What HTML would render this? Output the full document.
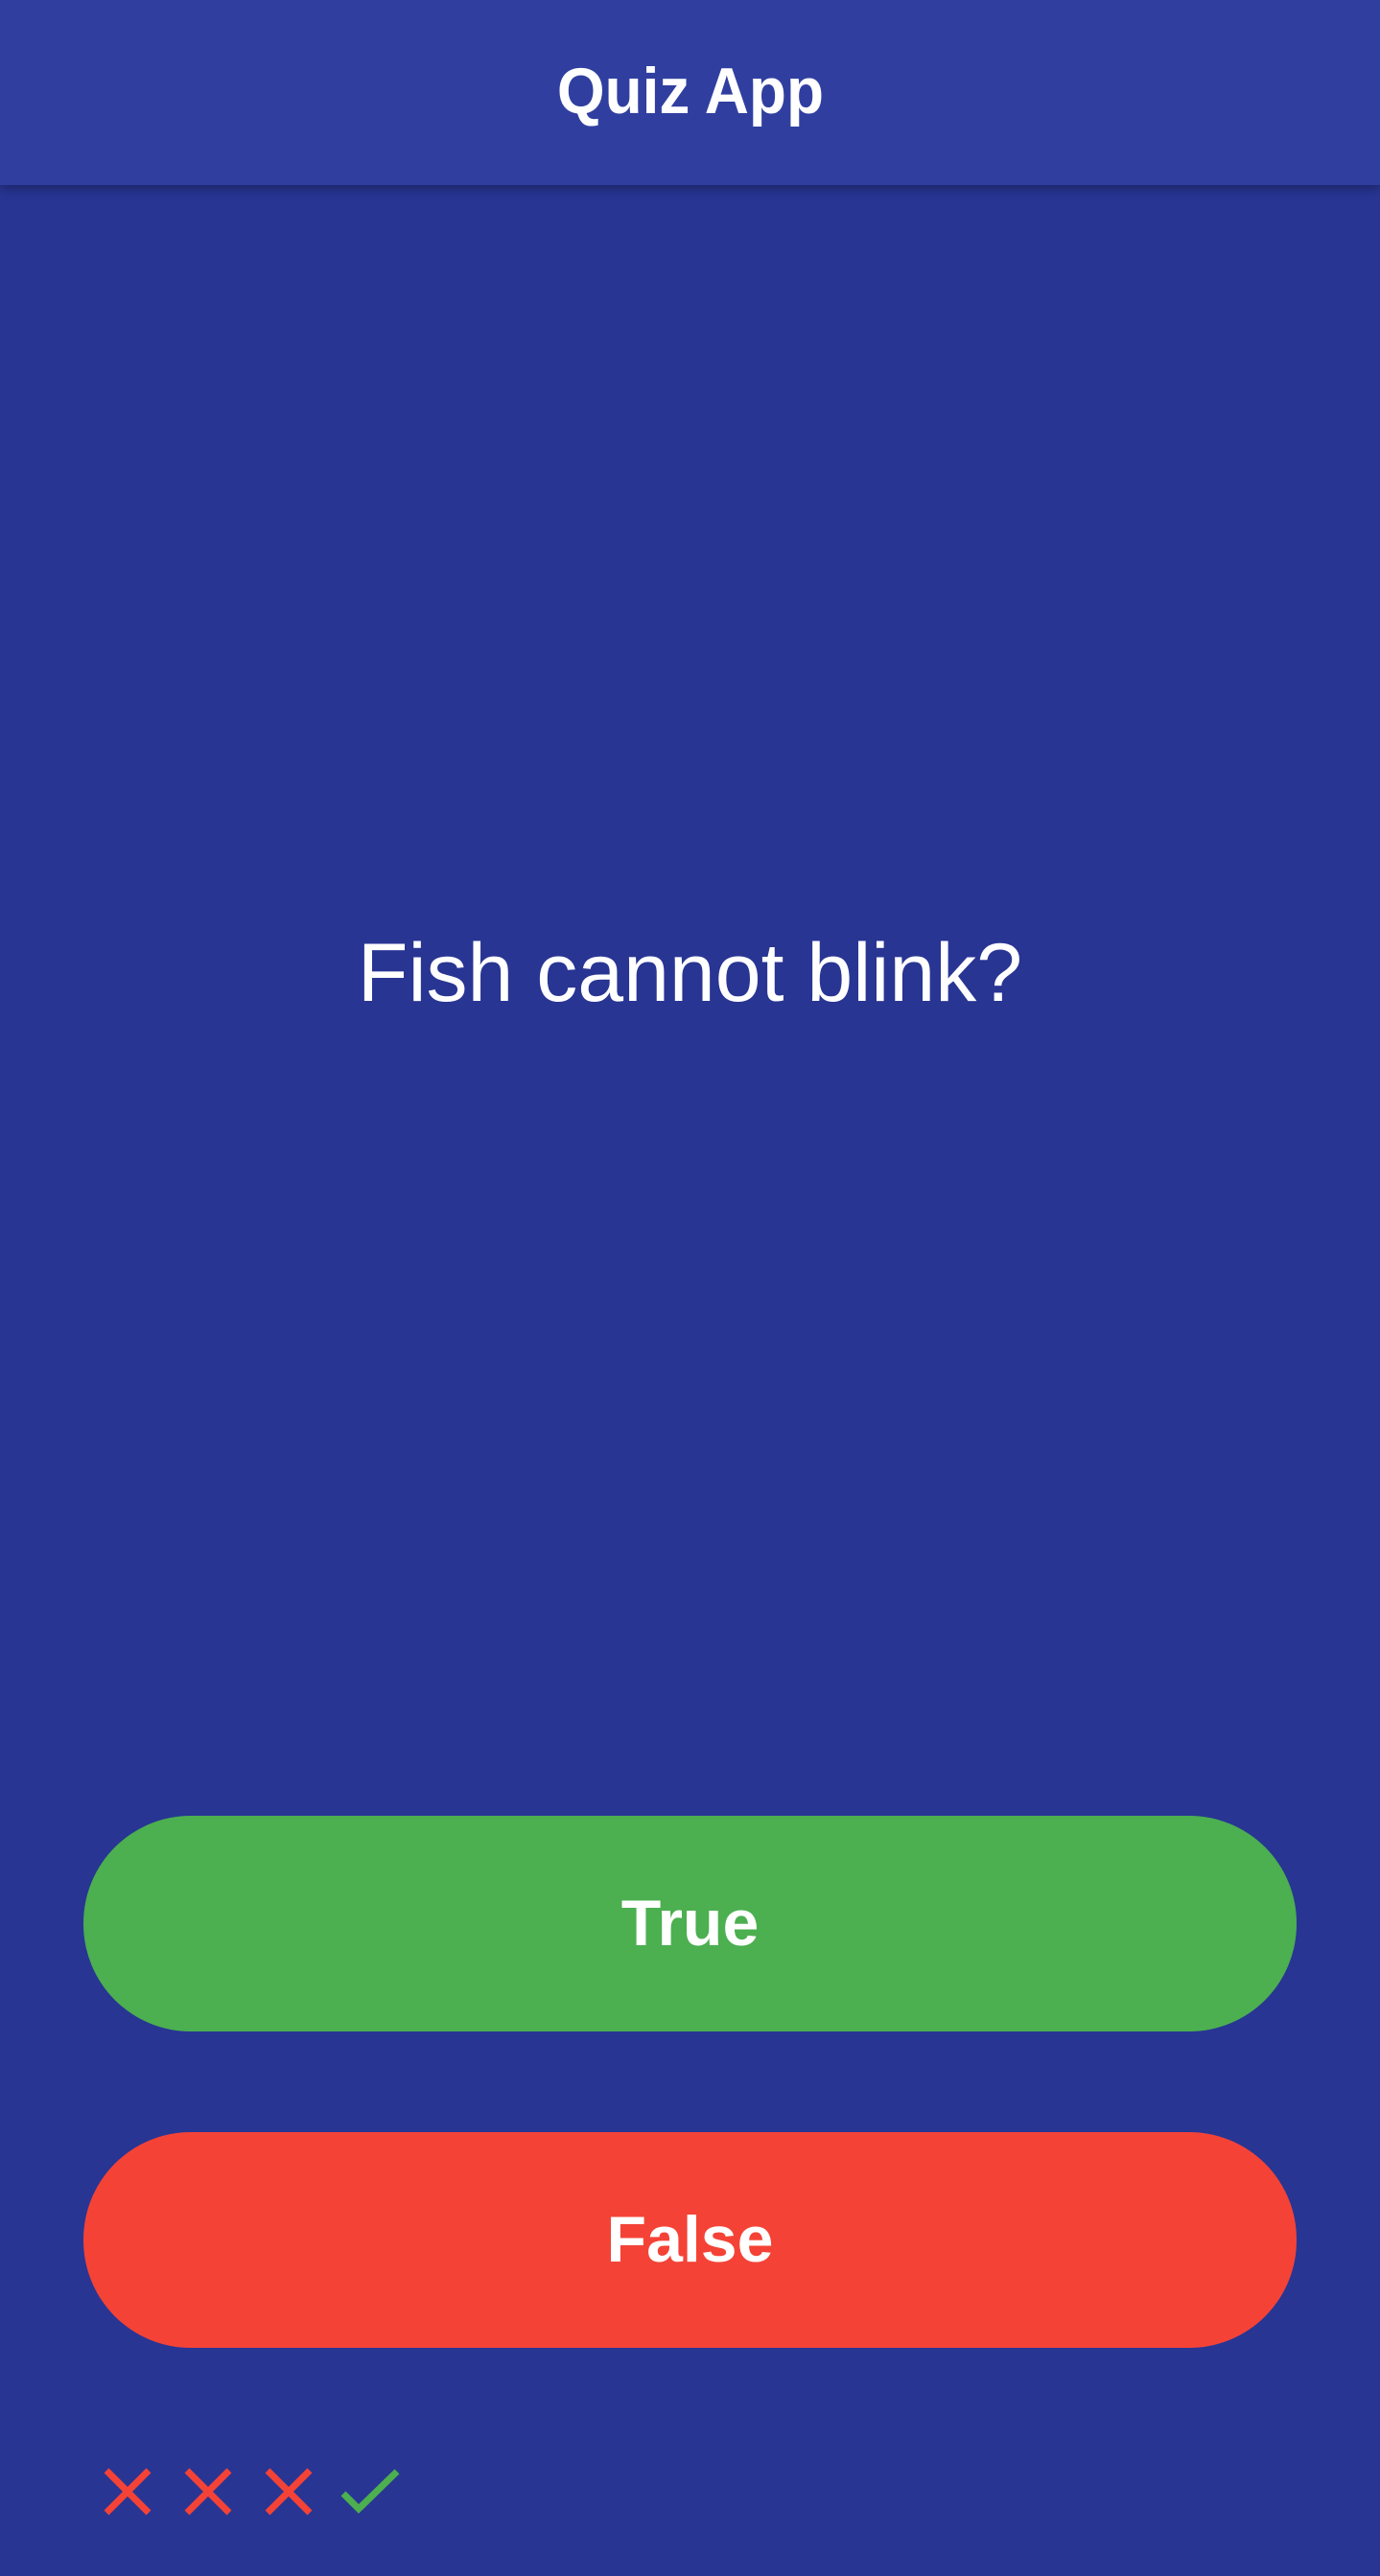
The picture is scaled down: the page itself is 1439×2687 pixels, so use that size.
<!DOCTYPE html>
<html><head><meta charset="utf-8"><style>
html,body{margin:0;padding:0}
body{width:1439px;height:2687px;background:#283593;position:relative;overflow:hidden;font-family:"Liberation Sans",sans-serif;color:#fff}
.bar{position:absolute;left:0;top:0;width:1439px;height:193px;background:#303F9F;box-shadow:0 4px 10px rgba(0,0,0,.3)}
.bar div{position:absolute;left:0;right:0;top:55px;text-align:center}
.bar span{display:inline-block;font-size:68px;font-weight:bold;line-height:80px;transform:scaleX(0.94)}
.q{position:absolute;left:0;right:0;top:965px;text-align:center;font-size:86px;line-height:100px}
.btn{position:absolute;left:87px;width:1265px;height:225px;border-radius:112px;text-align:center;font-size:68px;font-weight:bold;line-height:225px}
.t{top:1894px;background:#4CAF50}
.f{top:2224px;background:#F44336}
svg{position:absolute}
</style></head><body>
<div class="bar"><div><span>Quiz App</span></div></div>
<div class="q">Fish cannot blink?</div>
<div class="btn t">True</div>
<div class="btn f">False</div>
<svg style="left:0;top:2560px" width="460" height="80" viewBox="0 2560 460 80">
<g stroke="#F44336" stroke-width="7" fill="none">
<path d="M111 2577L155 2621M155 2577L111 2621"/>
<path d="M195 2577L239 2621M239 2577L195 2621"/>
<path d="M279 2577L323 2621M323 2577L279 2621"/>
</g>
<path d="M358 2601L374 2617L414 2578" stroke="#4CAF50" stroke-width="7" fill="none"/>
</svg>
</body></html>
